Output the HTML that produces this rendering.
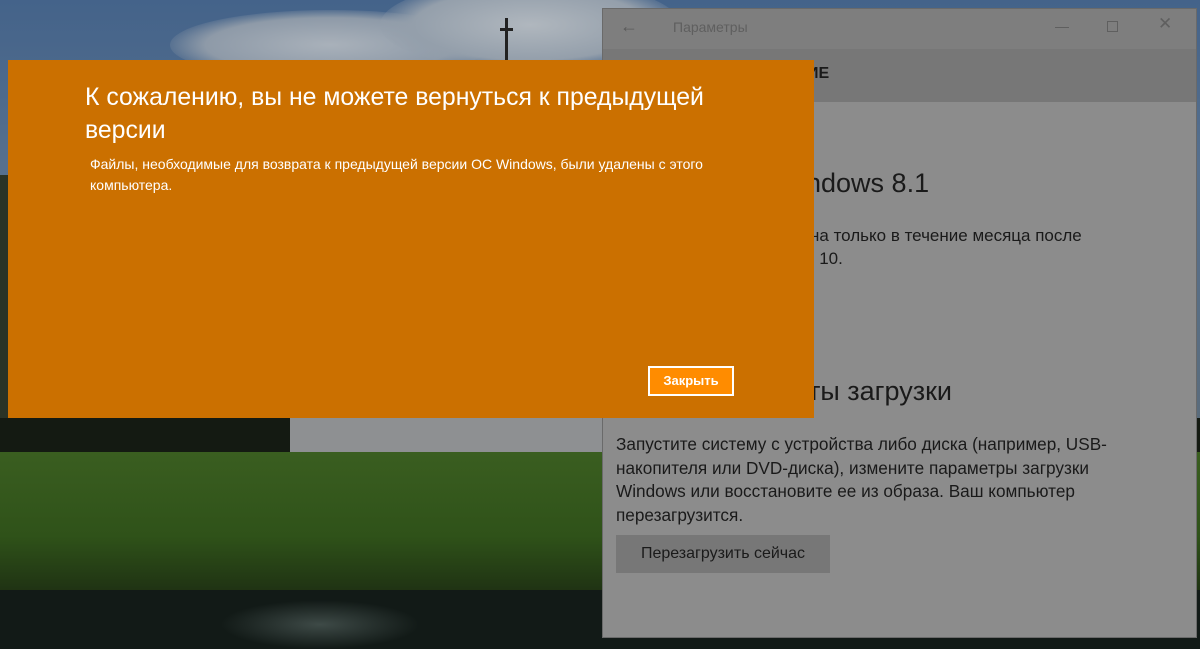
<!DOCTYPE html>
<html><head><meta charset="utf-8"><style>
*{margin:0;padding:0;box-sizing:border-box}
body{width:1200px;height:649px;overflow:hidden;position:relative;font-family:"Liberation Sans",sans-serif;background:#1a2218}
.a{position:absolute;white-space:nowrap}
</style></head><body>
<!-- background -->
<div class="a" style="left:0;top:0;width:1200px;height:420px;background:linear-gradient(180deg,#44638a 0%,#56708e 40%,#5a6c7c 100%)"></div>
<div class="a" style="left:170px;top:10px;width:320px;height:70px;border-radius:50%;background:radial-gradient(ellipse,#a9b1ba 0%,#8e9aa8 55%,rgba(90,110,140,0) 75%)"></div>
<div class="a" style="left:380px;top:-20px;width:300px;height:90px;border-radius:50%;background:radial-gradient(ellipse,#b0b7be 0%,#949fab 55%,rgba(90,110,140,0) 75%)"></div>
<div class="a" style="left:505px;top:18px;width:3px;height:45px;background:#222"></div>
<div class="a" style="left:500px;top:28px;width:13px;height:3px;background:#222"></div>
<div class="a" style="left:0;top:175px;width:10px;height:245px;background:#2a3326"></div>
<div class="a" style="left:0;top:418px;width:1200px;height:40px;background:#141a12"></div>
<div class="a" style="left:290px;top:418px;width:320px;height:38px;background:#8e9092"></div>
<div class="a" style="left:0;top:452px;width:1200px;height:140px;background:linear-gradient(180deg,#3a5e20,#2f5219 60%,#1f3213)"></div>
<div class="a" style="left:0;top:590px;width:1200px;height:59px;background:#121a17"></div>
<div class="a" style="left:220px;top:600px;width:200px;height:49px;border-radius:50%;background:radial-gradient(ellipse,#3e4a47,rgba(18,26,23,0) 70%)"></div>
<!-- settings window -->
<div class="a" style="left:602px;top:8px;width:595px;height:630px;background:#8c8c8c;border:1px solid #6a6a6a"></div>
<div class="a" style="left:603px;top:9px;width:593px;height:40px;background:#7e7e7e"></div>
<div class="a" style="left:603px;top:49px;width:593px;height:53px;background:#777"></div>
<div class="a" style="left:620px;top:16px;color:#5a5a5a;font-size:18px">←</div>
<div class="a" style="left:673px;top:19px;color:#5f5f5f;font-size:14px">Параметры</div>
<div class="a" style="left:1055px;top:27px;width:14px;height:1px;background:#5f5f5f"></div>
<div class="a" style="left:1107px;top:21px;width:11px;height:11px;border:1px solid #5f5f5f"></div>
<div class="a" style="left:1158px;top:14px;color:#5f5f5f;font-size:17px">✕</div>
<div class="a" style="left:807px;top:65px;color:#1a1a1a;font-size:16px;font-weight:bold">ИЕ</div>
<div class="a" style="left:806px;top:168px;color:#1a1a1a;font-size:27px">ndows 8.1</div>
<div class="a" style="left:810px;top:226px;color:#1a1a1a;font-size:17px">на только в течение месяца после</div>
<div class="a" style="left:806px;top:249px;color:#1a1a1a;font-size:17px">s 10.</div>
<div class="a" style="left:808px;top:376px;color:#1a1a1a;font-size:27px">ты загрузки</div>
<div class="a" style="left:616px;top:433px;color:#1a1a1a;font-size:17.2px;line-height:23.5px">Запустите систему с устройства либо диска (например, USB-<br>накопителя или DVD-диска), измените параметры загрузки<br>Windows или восстановите ее из образа. Ваш компьютер<br>перезагрузится.</div>
<div class="a" style="left:616px;top:535px;width:214px;height:38px;background:#777;color:#1a1a1a;font-size:16px;line-height:38px;text-align:center">Перезагрузить сейчас</div>
<!-- dialog -->
<div class="a" style="left:8px;top:60px;width:806px;height:358px;background:#cb7000"></div>
<div class="a" style="left:85px;top:81px;color:#fff;font-size:24.8px;line-height:33px">К сожалению, вы не можете вернуться к предыдущей<br>версии</div>
<div class="a" style="left:90px;top:154px;color:#fff;font-size:14px;line-height:21px">Файлы, необходимые для возврата к предыдущей версии ОС Windows, были удалены с этого<br>компьютера.</div>
<div class="a" style="left:648px;top:366px;width:86px;height:30px;background:#ff8c00;border:2px solid #fff;color:#fff;font-size:13px;line-height:26px;text-align:center;font-weight:bold">Закрыть</div>
</body></html>
